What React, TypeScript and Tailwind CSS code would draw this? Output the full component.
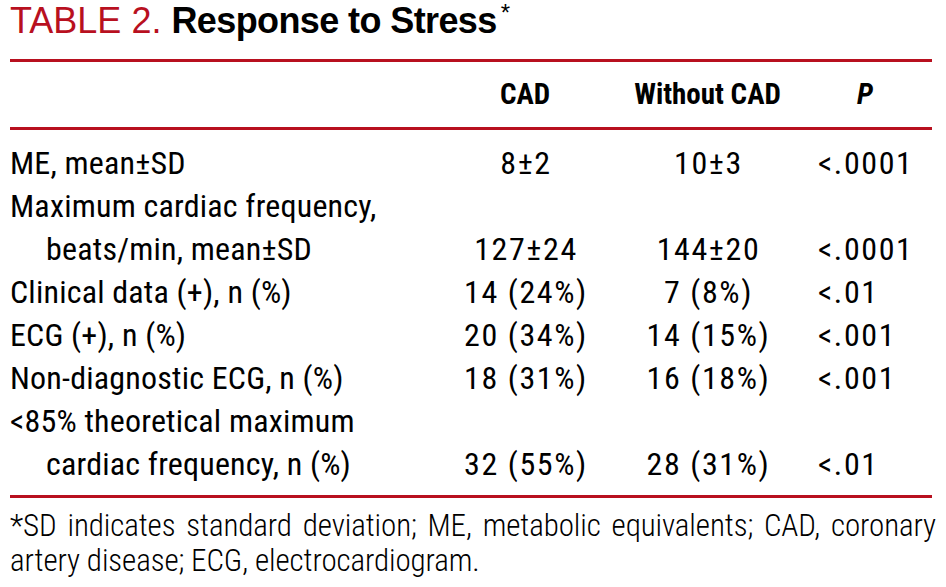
import React from 'react'

const RED = 'bg-[#b8101f]'

interface Row {
  label: string[]
  cad: string
  noCad: string
  p: string
}

const rows: Row[] = [
  { label: ['ME, mean±SD'], cad: '8±2', noCad: '10±3', p: '<.0001' },
  { label: ['Maximum cardiac frequency,', 'beats/min, mean±SD'], cad: '127±24', noCad: '144±20', p: '<.0001' },
  { label: ['Clinical data (+), n (%)'], cad: '14 (24%)', noCad: '7 (8%)', p: '<.01' },
  { label: ['ECG (+), n (%)'], cad: '20 (34%)', noCad: '14 (15%)', p: '<.001' },
  { label: ['Non-diagnostic ECG, n (%)'], cad: '18 (31%)', noCad: '16 (18%)', p: '<.001' },
  { label: ['<85% theoretical maximum', 'cardiac frequency, n (%)'], cad: '32 (55%)', noCad: '28 (31%)', p: '<.01' },
]

const narrow = "font-['Roboto_Condensed',Roboto,sans-serif] [font-stretch:75%]"

const App = () => {
  return (
    <div className="h-[587px] w-[946px] bg-white px-[10px] text-black">
      <h1 className="flex h-[59px] items-start pt-[1px] font-['Liberation_Sans',Arial,sans-serif] text-[36px] leading-[40px]">
        <span className="text-[#b8101f]">TABLE 2.</span>
        <span className="ml-[10px] font-bold tracking-[-0.6px]">Response to Stress</span>
        <span className="ml-[4px] text-[24px] leading-[24px]">*</span>
      </h1>
      <div className={`h-[3px] w-[922px] ${RED}`} />

      <div className={`grid h-[65px] grid-cols-[430px_170px_195px_1fr] items-center ${narrow} text-[29px] font-bold`}>
        <div />
        <div className="text-center">CAD</div>
        <div className="text-center">Without CAD</div>
        <div className="pl-[52px] italic">P</div>
      </div>
      <div className={`h-[3px] w-[922px] ${RED}`} />

      <div className={`pt-[12px] pb-[9px] ${narrow} text-[32px] leading-[43px]`}>
        {rows.map((row) => (
          <div key={row.label[0]} className="grid grid-cols-[430px_170px_195px_1fr]">
            <div className="tracking-[0.2px]">
              {row.label.map((line, i) => (
                <div key={line} className={i > 0 ? 'pl-[36px]' : ''}>
                  {line}
                </div>
              ))}
            </div>
            <div className="self-end pl-[2px] text-center tracking-[1.6px]">{row.cad}</div>
            <div className="self-end pl-[2px] text-center tracking-[1.6px]">{row.noCad}</div>
            <div className="self-end pl-[13px] tracking-[1.6px]">{row.p}</div>
          </div>
        ))}
      </div>
      <div className={`h-[3px] w-[922px] ${RED}`} />

      <p className={`pt-[10px] ${narrow} text-[31px] font-light leading-[35px] tracking-[-0.1px] [text-align-last:left] text-justify`}>
        *SD indicates standard deviation; ME, metabolic equivalents; CAD, coronary artery disease; ECG, electrocardiogram.
      </p>
    </div>
  )
}

export default App
